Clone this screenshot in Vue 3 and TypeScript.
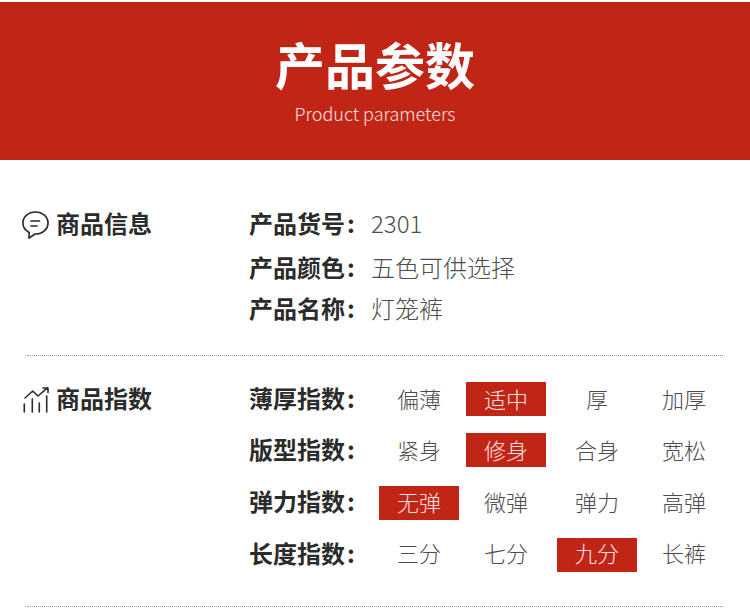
<script setup lang="ts">
interface IndexRow { label: string; options: string[]; active: number }

const infos = [
  { label: '产品货号', value: '2301' },
  { label: '产品颜色', value: '五色可供选择' },
  { label: '产品名称', value: '灯笼裤' },
]

const indexes: IndexRow[] = [
  { label: '薄厚指数', options: ['偏薄', '适中', '厚', '加厚'], active: 1 },
  { label: '版型指数', options: ['紧身', '修身', '合身', '宽松'], active: 1 },
  { label: '弹力指数', options: ['无弹', '微弹', '弹力', '高弹'], active: 0 },
  { label: '长度指数', options: ['三分', '七分', '九分', '长裤'], active: 2 },
]
</script>

<template>
  <div class="page">
    <header class="banner">
      <h1 class="banner-title">产品参数</h1>
      <p class="banner-sub">Product parameters</p>
    </header>

    <section class="block info">
      <div class="heading">
        <svg class="icon" viewBox="0 0 28 32" width="28" height="32" fill="none" stroke="#2b2b2b" stroke-width="1.7" stroke-linejoin="round" stroke-linecap="round">
          <path d="M13.500 5C6.500 5 .9 9.900 .9 16c0 4.100 2.500 7.500 6.300 9.400L7 31l6.200-4h.3C20.500 27 26 22.100 26 16S20.500 5 13.500 5z" />
          <path d="M9 14h8.500M9 19h6" />
        </svg>
        <h2 class="heading-text">商品信息</h2>
      </div>
      <div class="info-list">
        <div v-for="item in infos" :key="item.label" class="info-row">
          <span class="label">{{ item.label }}<span class="colon">:</span></span>
          <span class="value">{{ item.value }}</span>
        </div>
      </div>
    </section>

    <div class="rule"></div>

    <section class="block index">
      <div class="heading">
        <svg class="icon" viewBox="0 0 28 32" width="28" height="32" fill="none" stroke="#2b2b2b" stroke-width="1.6" stroke-linejoin="round" stroke-linecap="round">
          <path d="M3 14l7.700-7 5.300 5 9.500-8.200M21 4h5v4.500" />
          <path d="M2.300 20v8M10.300 15v13M17.300 19v9M24.700 12v16" />
        </svg>
        <h2 class="heading-text index-heading">商品指数</h2>
      </div>
      <div class="index-list">
        <div v-for="row in indexes" :key="row.label" class="index-row">
          <span class="label">{{ row.label }}<span class="colon">:</span></span>
          <div class="options">
            <span
              v-for="(option, i) in row.options"
              :key="option"
              class="option"
              :class="{ active: i === row.active }"
            >{{ option }}</span>
          </div>
        </div>
      </div>
    </section>

    <div class="rule rule-end"></div>
  </div>
</template>

<style scoped>
.page {
  width: 750px;
  height: 616px;
  overflow: hidden;
  background: #fff;
  font-family: "Noto Sans CJK SC", "Noto Sans", sans-serif;
  color: #2b2b2b;
  padding-top: 2px;
  box-sizing: border-box;
}
.banner {
  height: 158px;
  background: #c12516;
  color: #fff;
  text-align: center;
  box-sizing: border-box;
  padding-top: 28px;
}
.banner-title {
  margin: 0;
  font-size: 50px;
  line-height: 66px;
  font-weight: 700;
}
.banner-sub {
  margin: 4px 0 0;
  font-size: 18px;
  line-height: 26px;
  font-weight: 300;
  color: #f8e3e0;
}
.block {
  display: flex;
  padding-left: 22px;
}
.info {
  padding-top: 45px;
  height: 195px;
  box-sizing: border-box;
}
.index {
  padding-top: 26px;
  height: 250px;
  box-sizing: border-box;
}
.heading {
  display: flex;
  align-items: flex-start;
  width: 227px;
  height: 36px;
  flex: none;
}
.icon {
  flex: none;
  margin-right: 6px;
  margin-top: 2px;
}
.heading-text {
  margin: 0;
  font-size: 24px;
  line-height: 36px;
  font-weight: 700;
}
.index-heading {
  line-height: 32px;
}
.label {
  width: 122px;
  flex: none;
  font-size: 24px;
  line-height: 36px;
  font-weight: 700;
  white-space: nowrap;
}
.colon {
  margin-left: 2px;
}
.info-row {
  display: flex;
  height: 36px;
  margin-bottom: 5px;
}
.info-row:first-child {
  margin-bottom: 8px;
}
.value {
  font-size: 24px;
  line-height: 36px;
  font-weight: 300;
  color: #4d4d4d;
}
.rule {
  margin-left: 27px;
  width: 696px;
  border-top: 1px dotted #999;
}
.index-list {
  display: flex;
  flex-direction: column;
}
.index-row {
  display: flex;
  height: 51px;
}
.index-row .label {
  line-height: 32px;
}
.index-row:nth-child(2) {
  height: 53px;
}
.index-row:nth-child(3) {
  height: 52px;
}
.index-row:nth-child(n + 3) .label {
  line-height: 30px;
}
.index-row:nth-child(4) .label {
  line-height: 29px;
}
.options {
  display: grid;
  grid-template-columns: 87px 91px 87px 80px;
  margin-left: 8px;
}
.option {
  width: 80px;
  height: 34px;
  text-align: center;
  font-size: 22px;
  line-height: 32px;
  font-weight: 300;
  color: #4d4d4d;
}
.index-row:nth-child(3) .option {
  line-height: 30px;
}
.index-row:nth-child(4) .option {
  line-height: 28px;
}
.option.active {
  background: #c12516;
  color: #f8e3e0;
}
</style>
